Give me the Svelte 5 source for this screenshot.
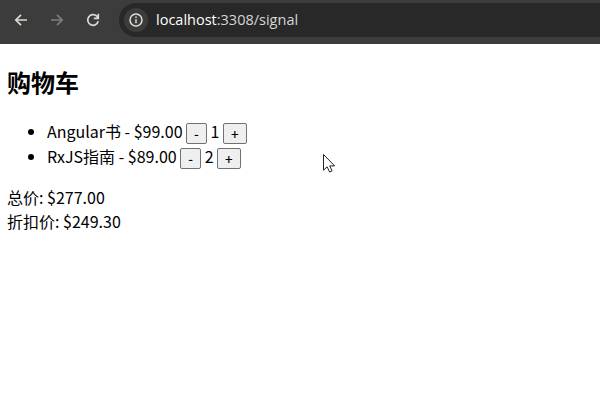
<script>
  let items = $state([
    { name: 'Angular书', price: 99, qty: 1 },
    { name: 'RxJS指南', price: 89, qty: 2 }
  ]);
  let total = $derived(items.reduce((sum, item) => sum + item.price * item.qty, 0));
  let discounted = $derived(total * 0.9);
</script>

<div class="window">
  <header>
    <svg class="nav" viewBox="0 0 16 16"><path d="M14 8H2.8M8 2.8 2.8 8 8 13.2" /></svg>
    <svg class="nav dim" viewBox="0 0 16 16"><path d="M2 8h11.2M8 2.8 13.2 8 8 13.2" /></svg>
    <svg class="nav reload" viewBox="0 0 16 16"><path d="M13.2 9.2A5.3 5.3 0 1 1 11.8 4.2L13.3 5.8M13.3 1.8v4.6H8.8" /></svg>
    <div class="address">
      <span class="info">
        <svg viewBox="0 0 14 14"><circle cx="7" cy="7" r="6" /><path d="M7 6.3v4M7 3.6v1.5" /></svg>
      </span>
      <span class="url"><b>localhost</b>:3308/signal</span>
    </div>
  </header>
  <main>
    <h2>购物车</h2>
    <ul>
      {#each items as item}
        <li>
          <span>{item.name} - ${item.price.toFixed(2)}</span>
          <button class="minus" onclick={() => item.qty--}>-</button>
          <span>{item.qty}</span>
          <button onclick={() => item.qty++}>+</button>
        </li>
      {/each}
    </ul>
    <div class="sum">总价: ${total.toFixed(2)}</div>
    <div class="sum">折扣价: ${discounted.toFixed(2)}</div>
  </main>
  <svg class="cursor" viewBox="0 0 14 21"><path d="M1.5 1.5v15.7l3.6-3.4 2.5 5.2 2.5-1.1-2.4-5h5z" /></svg>
</div>

<style>
  .window {
    position: relative;
    height: 400px;
    overflow: hidden;
    background: #fff;
    color: #000;
    font: 16px/24px 'Noto Sans CJK SC', sans-serif;
  }
  header {
    display: flex;
    align-items: center;
    box-sizing: border-box;
    height: 44px;
    padding: 0 0 4px 13px;
    background: #3c3c3c;
  }
  .nav {
    width: 16px;
    height: 16px;
    margin-right: 20px;
    fill: none;
    stroke: #dedad2;
    stroke-width: 1.7;
  }
  .dim {
    stroke: #7d7d7b;
  }
  .reload {
    margin-right: 18px;
  }
  .address {
    display: flex;
    align-items: center;
    flex: 1;
    height: 34px;
    border-radius: 17px 0 0 17px;
    background: #282828;
  }
  .info {
    display: flex;
    align-items: center;
    justify-content: center;
    width: 24px;
    height: 24px;
    margin: 0 8px 0 5px;
    border-radius: 50%;
    background: #3c3c3c;
  }
  .info svg {
    width: 14px;
    height: 14px;
    fill: none;
    stroke: #e2dfd9;
    stroke-width: 1.5;
  }
  .url {
    color: #d6d6d6;
    font: 14.5px/20px 'Open Sans', sans-serif;
  }
  .url b {
    color: #fff;
    font-weight: 400;
  }
  main {
    padding: 20px 7px;
  }
  h2 {
    margin: 0;
    font-size: 24px;
    line-height: 36px;
    font-weight: 700;
  }
  ul {
    margin: 19px 0 16px;
    padding-left: 40px;
  }
  li {
    height: 25px;
    line-height: 25px;
  }
  button {
    box-sizing: border-box;
    width: 23.5px;
    height: 21px;
    padding: 0;
    border: 1px solid #6b7278;
    border-radius: 2px;
    background: #efefef;
    color: #000;
    font: 500 13.333px/19px 'Noto Sans CJK SC', sans-serif;
    vertical-align: -1px;
  }
  .minus {
    width: 21px;
    margin-left: -0.2px;
  }
  .cursor {
    position: absolute;
    left: 322px;
    top: 153px;
    width: 14px;
    height: 21px;
    fill: #fff;
    stroke: #222;
  }
</style>
